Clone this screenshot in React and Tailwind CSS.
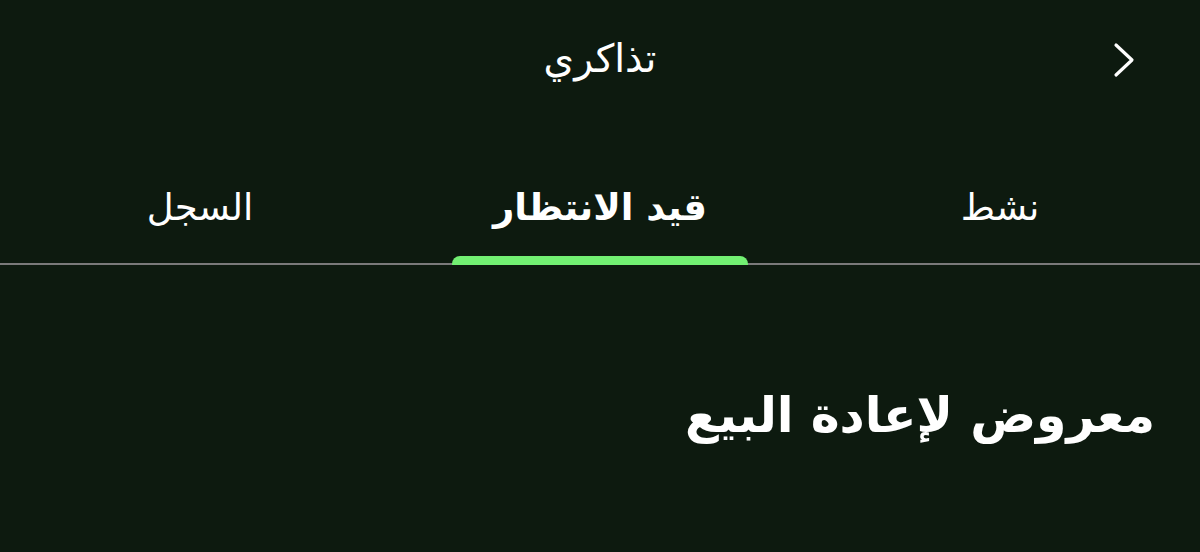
import React from 'react';

const tabs = [
  { id: 'active', label: 'نشط' },
  { id: 'pending', label: 'قيد الانتظار' },
  { id: 'history', label: 'السجل' },
];

export default function App() {
  const current = 'pending';

  return (
    <div
      dir="rtl"
      className="w-[1200px] h-[552px] bg-[#0d1a0f] text-white overflow-hidden"
      style={{ fontFamily: '"DejaVu Sans", "Noto Sans", sans-serif' }}
    >
      {/* Header */}
      <div className="relative h-[120px] flex items-center justify-center">
        <button className="absolute right-[62px] top-[42px] w-[26px] h-[36px] flex items-center justify-center">
          <svg width="26" height="36" viewBox="0 0 26 36" fill="none">
            <path d="M4 3 L20 18 L4 33" stroke="white" strokeWidth="3.2" strokeLinecap="round" strokeLinejoin="round" />
          </svg>
        </button>
        <h1 className="text-[39px] leading-none -mt-[4px]">تذاكري</h1>
      </div>

      {/* Tabs */}
      <div className="relative grid grid-cols-3 h-[145px] border-b-2 border-[#7a7a7a]">
        {tabs.map((tab) => (
          <div key={tab.id} className="relative flex items-center justify-center">
            <span className={`text-[37px] leading-none mt-[32px] ${tab.id === current ? 'font-bold' : ''}`}>
              {tab.label}
            </span>
            {tab.id === current && (
              <span className="absolute bottom-[-2px] left-1/2 -translate-x-1/2 w-[296px] h-[9px] bg-[#72f072] rounded-t-[8px]" />
            )}
          </div>
        ))}
      </div>

      {/* Section */}
      <div className="px-[45px] pt-[126px]">
        <h2 className="text-[49px] font-bold leading-none">معروض لإعادة البيع</h2>
      </div>
    </div>
  );
}
